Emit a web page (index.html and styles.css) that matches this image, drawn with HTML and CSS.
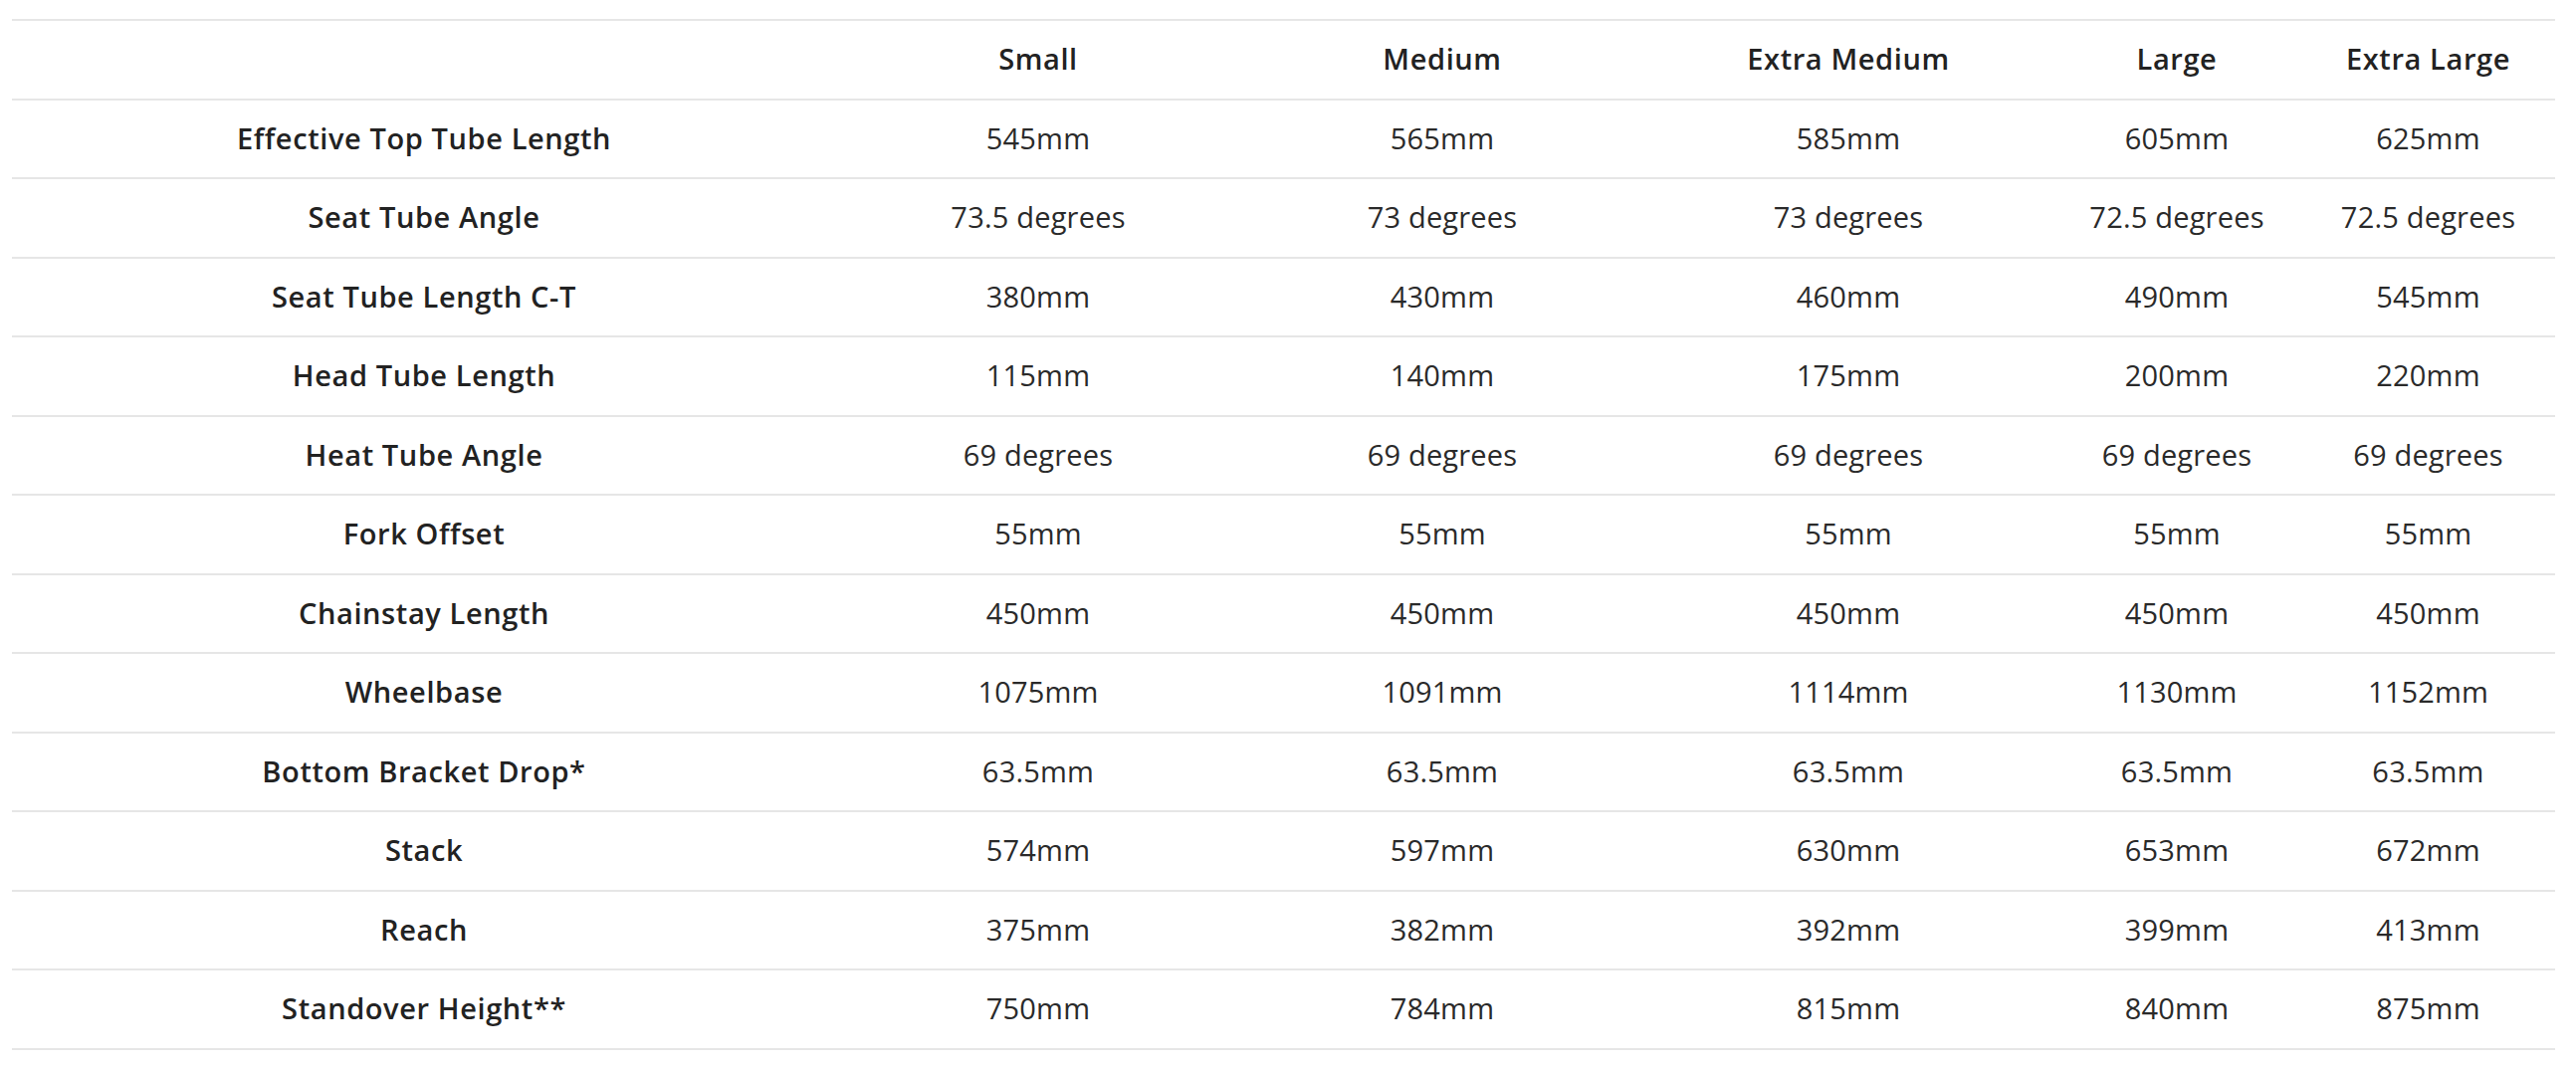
FILE: index.html
```html
<!DOCTYPE html>
<html lang="en">
<head>
<meta charset="utf-8">
<title>Geometry</title>
<link rel="stylesheet" href="styles.css">
</head>
<body>
<div class="wrap">
<table class="geo">
<colgroup>
<col class="c-label"><col class="c-s"><col class="c-m"><col class="c-xm"><col class="c-l"><col class="c-xl">
</colgroup>
<thead>
<tr><th></th><th>Small</th><th>Medium</th><th>Extra Medium</th><th>Large</th><th>Extra Large</th></tr>
</thead>
<tbody>
<tr><th>Effective Top Tube Length</th><td>545mm</td><td>565mm</td><td>585mm</td><td>605mm</td><td>625mm</td></tr>
<tr><th>Seat Tube Angle</th><td>73.5 degrees</td><td>73 degrees</td><td>73 degrees</td><td>72.5 degrees</td><td>72.5 degrees</td></tr>
<tr><th>Seat Tube Length C-T</th><td>380mm</td><td>430mm</td><td>460mm</td><td>490mm</td><td>545mm</td></tr>
<tr><th>Head Tube Length</th><td>115mm</td><td>140mm</td><td>175mm</td><td>200mm</td><td>220mm</td></tr>
<tr><th>Heat Tube Angle</th><td>69 degrees</td><td>69 degrees</td><td>69 degrees</td><td>69 degrees</td><td>69 degrees</td></tr>
<tr><th>Fork Offset</th><td>55mm</td><td>55mm</td><td>55mm</td><td>55mm</td><td>55mm</td></tr>
<tr><th>Chainstay Length</th><td>450mm</td><td>450mm</td><td>450mm</td><td>450mm</td><td>450mm</td></tr>
<tr><th>Wheelbase</th><td>1075mm</td><td>1091mm</td><td>1114mm</td><td>1130mm</td><td>1152mm</td></tr>
<tr><th>Bottom Bracket Drop*</th><td>63.5mm</td><td>63.5mm</td><td>63.5mm</td><td>63.5mm</td><td>63.5mm</td></tr>
<tr><th>Stack</th><td>574mm</td><td>597mm</td><td>630mm</td><td>653mm</td><td>672mm</td></tr>
<tr><th>Reach</th><td>375mm</td><td>382mm</td><td>392mm</td><td>399mm</td><td>413mm</td></tr>
<tr><th>Standover Height**</th><td>750mm</td><td>784mm</td><td>815mm</td><td>840mm</td><td>875mm</td></tr>
</tbody>
</table>
</div>
</body>
</html>
```
FILE: styles.css
```css
html, body {
  margin: 0;
  padding: 0;
  background: #ffffff;
}
body {
  font-family: "Open Sans", "Liberation Sans", sans-serif;
  color: #222222;
}
.wrap {
  padding: 19px 21px 0 12px;
}
.geo {
  width: 2555px;
  border-collapse: collapse;
  table-layout: fixed;
}
.c-label { width: 828px; }
.c-s { width: 406px; }
.c-m { width: 406px; }
.c-xm { width: 410px; }
.c-l { width: 250px; }
.c-xl { width: 255px; }
.geo th,
.geo td {
  height: 77.5px;
  padding: 0;
  text-align: center;
  vertical-align: middle;
  border-top: 2px solid #e6e6e6;
  border-bottom: 2px solid #e6e6e6;
  font-size: 29px;
  line-height: 1.2;
  white-space: nowrap;
}
.geo th {
  font-weight: 600;
  color: #222222;
  letter-spacing: 0.6px;
}
.geo td {
  font-weight: 400;
  color: #2a2a2a;
  letter-spacing: 0.2px;
}
```
